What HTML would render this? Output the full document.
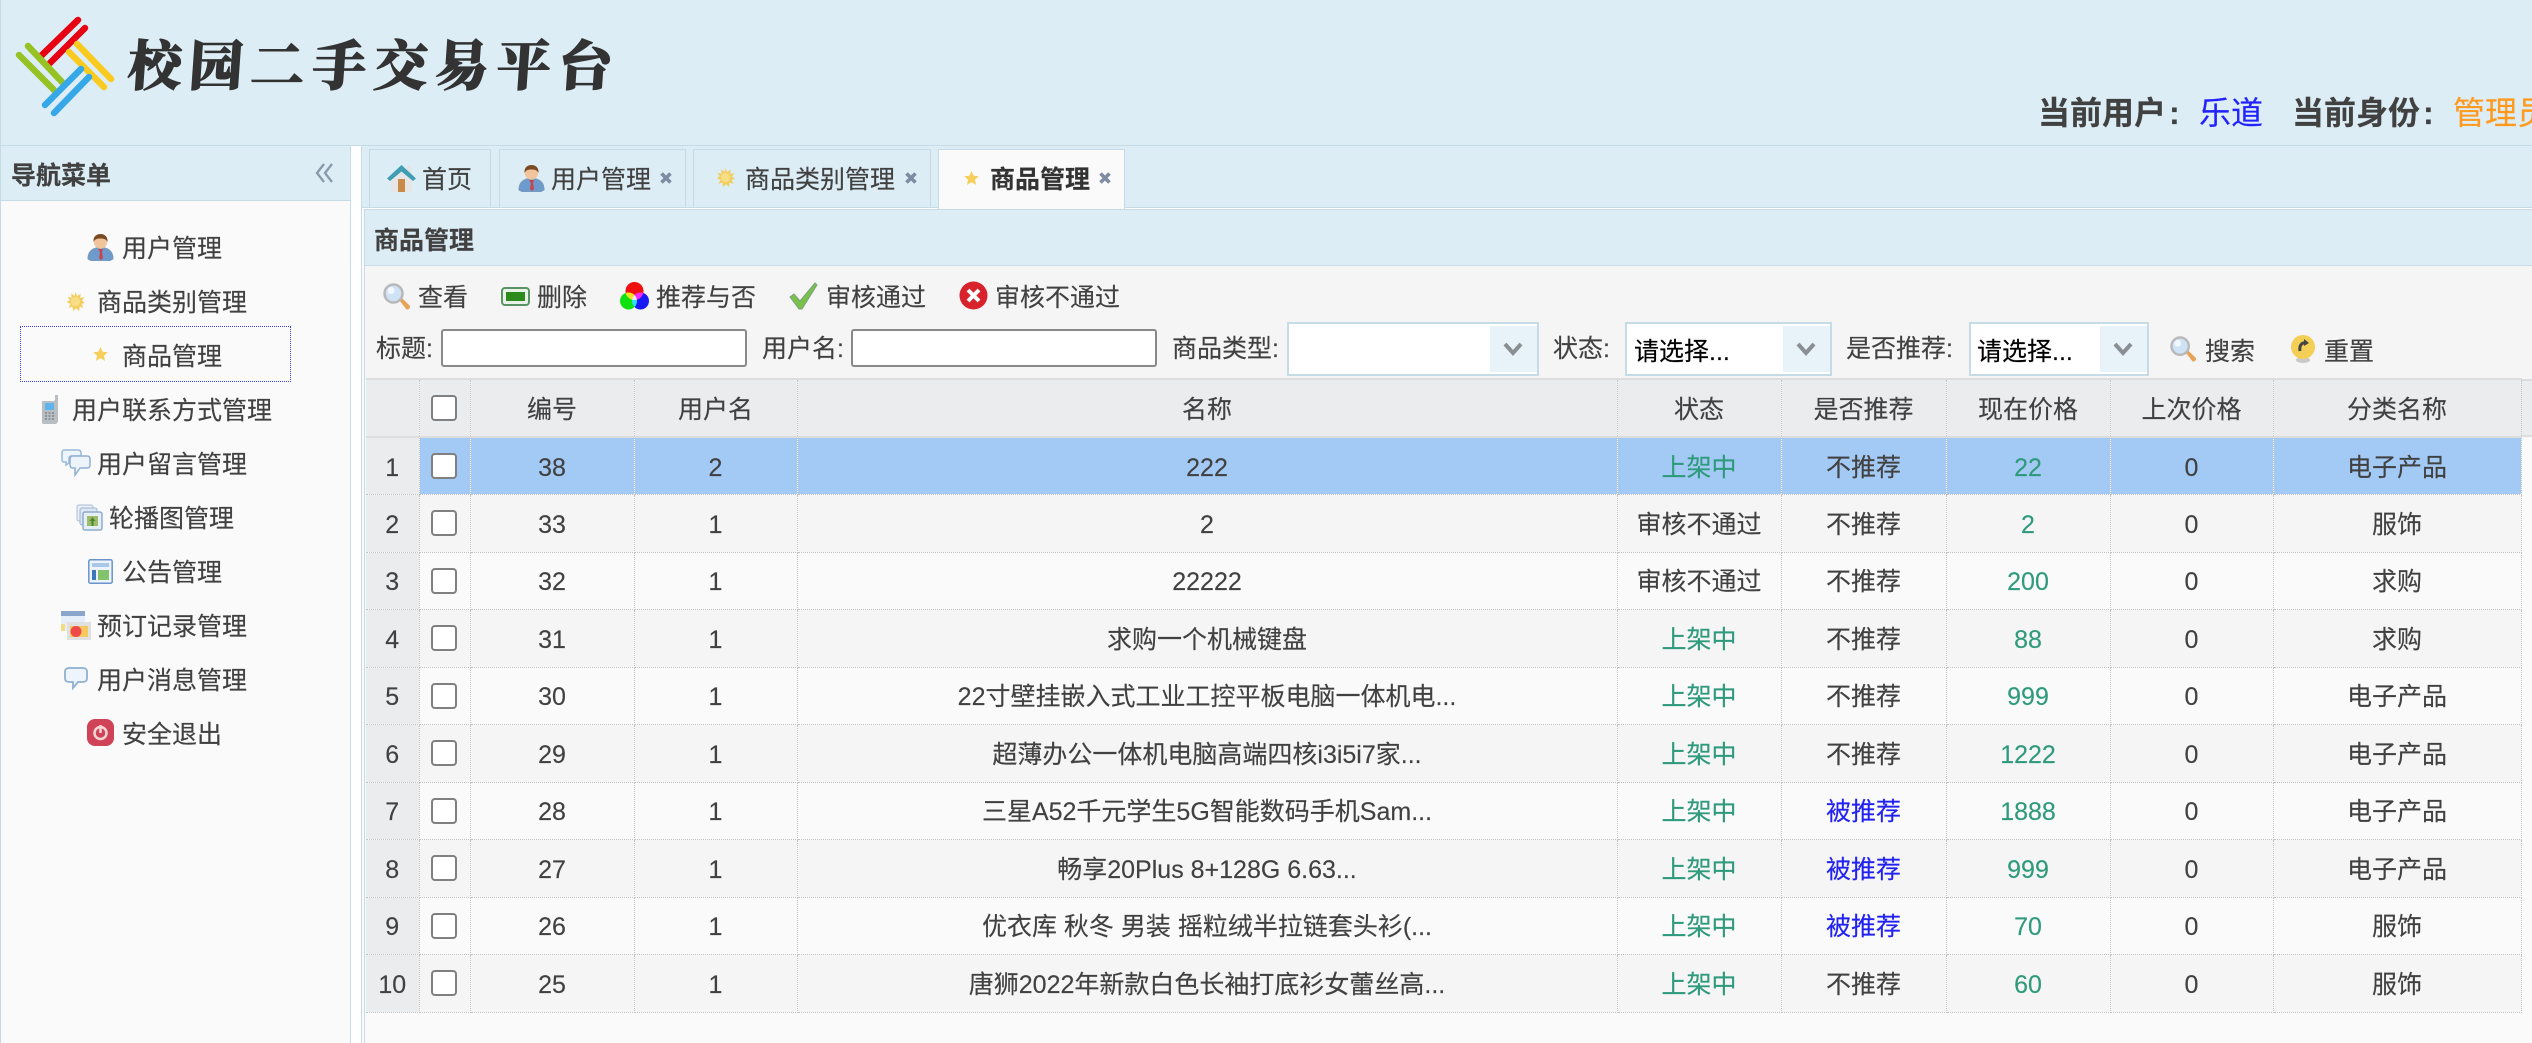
<!DOCTYPE html>
<html lang="zh-CN">
<head>
<meta charset="utf-8">
<title>校园二手交易平台</title>
<style>
html,body{margin:0;padding:0;}
body{position:relative;width:2532px;height:1043px;overflow:hidden;background:#fafafa;color:#414141;font:25px/30px "Liberation Sans","Noto Sans CJK SC",sans-serif;-webkit-text-stroke:.15px currentColor;}
.a{position:absolute;}
.t{position:absolute;white-space:nowrap;line-height:30px;margin-top:2px;}
.b{font-weight:700;}
svg.a{overflow:visible;}
.tab{position:absolute;top:149px;height:58px;box-sizing:border-box;border:1px solid #c5dbe6;border-bottom:0;background:#dcedf5;}
.tab.on{background:#fafafa;height:60px;}
.inp{position:absolute;top:329px;height:38px;box-sizing:border-box;background:#fff;border:2px solid #8a8a8a;border-radius:3px;}
.sel{position:absolute;top:322px;height:54px;box-sizing:border-box;background:#fff;border:2px solid #c5dbe6;}
.sel i{position:absolute;right:0;top:2px;bottom:2px;background:#e8f3f9;}
table{position:absolute;left:366px;top:378px;border-collapse:collapse;table-layout:fixed;width:2155px;font-size:25px;}
td{box-sizing:border-box;height:57.5px;padding:3px 0 0;text-align:center;white-space:nowrap;overflow:hidden;border-right:1px dotted #c4c4c4;border-bottom:1px dotted #c4c4c4;}
tr.h td{background:#ebecee;height:58px;border-top:2px solid #ddd;border-bottom:2px solid #ddd;}
tr.e td{background:#f5f5f5;}
tr.o td{background:#fafafa;}
tr.s td{background:#a3c9f5;}
tr td:first-child{background:#ebecee;}
.c{display:inline-block;vertical-align:middle;width:26px;height:26px;box-sizing:border-box;background:#fff;border:2px solid #808080;border-radius:4px;position:relative;top:-3px;left:-1px;}
.g{color:#2f9a7c;}
.u{color:#2222f0;}
</style>
</head>
<body>
<svg width="0" height="0" style="position:absolute">
<defs>
<symbol id="user" viewBox="0 0 27 27">
<path d="M1 25c0-7 4-10 8-11h9c4 1 8 4 8 11l-4 2H5z" fill="#6d9bcd" stroke="#7d98b5"/>
<path d="M11 15h5l-1 3 1 6-2 2-2-2 1-6z" fill="#c8434a"/>
<circle cx="13.5" cy="8" r="6.6" fill="#f2c49c"/>
<path d="M6.500 8C6 2 10 0 13.500 0S21 2 20.500 8C19 5 17 4.500 13.500 4.500S8 5 6.500 8z" fill="#7a4a22"/>
</symbol>
<symbol id="sun" viewBox="0 0 20 20">
<path d="M10 0l1.800 4.500L15.500 1.500l-.6 4.800 4.600-.8-2.900 3.700 3.400 1.800-3.700 1.700 2.300 4-4.300-1.500-.6 4.800L10.500 17l-3 3-.7-4.700-4.300 1.400 2.300-4L.8 10.500l3.400-2L1.300 5 5.900 6l-.5-4.700L9 4.400z" fill="#f2cd5e"/>
<circle cx="10" cy="10" r="5" fill="#f7dd84"/>
</symbol>
<symbol id="star" viewBox="0 0 16 16">
<path d="M8 0l2.300 5 5.400.6-4 3.700 1.100 5.500L8 12l-4.800 2.800 1.100-5.500-4-3.700L5.700 5z" fill="#f6cf5a"/>
</symbol>
<symbol id="mag" viewBox="0 0 27 27">
<path d="M16 17l3-2 8 8c.5 2-1.500 4-3.500 3.500z" fill="#e5a45a"/>
<circle cx="10.500" cy="10.500" r="9" fill="#cfe3f6" stroke="#b9b9b9" stroke-width="2.500"/>
<circle cx="8" cy="7.500" r="3.500" fill="#f2f8fe"/>
</symbol>
</defs>
</svg>

<!-- Header -->
<div class="a" style="left:0;top:0;width:2532px;height:145px;background:#dcedf5;border-left:1px solid #c5dbe6;box-sizing:border-box;"></div>
<div class="a" style="left:0;top:145px;width:2532px;height:1px;background:#c5dbe6;"></div>
<svg class="a" style="left:0;top:0" width="125" height="125" fill="none" stroke-width="6.500" stroke-linecap="round">
<path d="M78 20 42 55M85 28 50 63" stroke="#e60012"/>
<path d="M77 44 111 79M69 52 104 87" stroke="#fbca1e"/>
<path d="M28 46 62 82M19 55 54 90" stroke="#97c224"/>
<path d="M81 69 45 105M89 77 54 113" stroke="#36a8e8"/>
</svg>
<div class="t" style="left:128px;top:27px;margin:0;line-height:72px;font-size:54px;letter-spacing:7.500px;font-weight:900;color:#333;-webkit-text-stroke:1px #333;font-family:'Noto Serif CJK SC','Liberation Serif',serif;transform:skewX(-4deg);">校园二手交易平台</div>
<div class="t b" style="left:2038px;top:93px;margin:0;line-height:40px;font-size:32px;">当前用户<span style="margin-left:3px">:</span></div>
<div class="t" style="left:2199px;top:93px;margin:0;line-height:40px;font-size:32px;color:#2222ff;">乐道</div>
<div class="t b" style="left:2292px;top:93px;margin:0;line-height:40px;font-size:32px;">当前身份<span style="margin-left:3px">:</span></div>
<div class="t" style="left:2453px;top:93px;margin:0;line-height:40px;font-size:32px;color:#ff9a1f;">管理员</div>

<!-- Sidebar -->
<div class="a" style="left:0;top:146px;width:351px;height:897px;box-sizing:border-box;background:#fafafa;border-left:1px solid #c5dbe6;border-right:1px solid #c5dbe6;"></div>
<div class="a" style="left:1px;top:146px;width:349px;height:54px;background:#dcedf5;border-bottom:1px solid #c5dbe6;"></div>
<div class="a" style="left:351px;top:146px;width:10px;height:897px;background:#fff;"></div>
<div class="a" style="left:361px;top:146px;width:1px;height:897px;background:#c5dbe6;"></div>
<div class="t b" style="left:11px;top:159px;">导航菜单</div>
<svg class="a" style="left:315px;top:163px" width="19" height="20" fill="none" stroke="#8a98a8" stroke-width="2.300"><path d="M9 1 2 10l7 9M17 1l-7 9 7 9"/></svg>

<div class="a" style="left:20px;top:326px;width:271px;height:56px;box-sizing:border-box;border:1px dotted #3a3af0;"></div>

<svg class="a" style="left:87px;top:234px" width="27" height="27"><use href="#user"/></svg>
<div class="t" style="left:122px;top:232px;">用户管理</div>
<svg class="a" style="left:66px;top:292px" width="19" height="19"><use href="#sun"/></svg>
<div class="t" style="left:97px;top:286px;">商品类别管理</div>
<svg class="a" style="left:93px;top:347px" width="15" height="15"><use href="#star"/></svg>
<div class="t" style="left:122px;top:340px;">商品管理</div>

<svg class="a" style="left:41px;top:395px" width="18" height="29" viewBox="0 0 18 29">
<path d="M1 6h12l1-1V0h3v27l-2 2H2l-1-1z" fill="#b9bec2"/><rect x="4" y="8" width="9" height="7" fill="#5fb4ee"/><path d="M4 18h9M4 21h9M4 24h9" stroke="#8d9397" stroke-width="2" stroke-dasharray="2 1.500"/>
</svg>
<div class="t" style="left:72px;top:394px;">用户联系方式管理</div>

<svg class="a" style="left:61px;top:449px" width="30" height="28" viewBox="0 0 30 28">
<path d="M3 1h14c2 0 3 1 3 3v3H10c-2 0-2 2-2 3v4l-3 2v-3H3c-2 0-2-1-2-3V4c0-2 1-3 2-3z" fill="#eef4fb" stroke="#9bb8d8" stroke-width="1.500"/>
<path d="M12 7h14c2 0 3 1 3 3v6c0 2-1 3-3 3h-7l-5 7v-7h-2c-2 0-3-1-3-3v-6c0-2 1-3 3-3z" fill="#eef4fb" stroke="#8fb0d3" stroke-width="1.500"/>
</svg>
<div class="t" style="left:97px;top:448px;">用户留言管理</div>

<svg class="a" style="left:76px;top:504px" width="27" height="27" viewBox="0 0 27 27">
<rect x="1" y="1" width="16" height="16" rx="2" fill="#eaf0f8" stroke="#a9bcd3"/><rect x="4" y="4" width="17" height="17" rx="2" fill="#dde7f3" stroke="#a0b5ce"/>
<rect x="7" y="8" width="19" height="18" rx="2" fill="#e6eef7" stroke="#8eacd0" stroke-width="1.500"/><rect x="11" y="12" width="11" height="10" fill="#9dbb6a"/><path d="M16.500 13l3 4h-6zM15.500 17h2v5h-2z" fill="#4a8a2c"/>
</svg>
<div class="t" style="left:109px;top:502px;">轮播图管理</div>

<svg class="a" style="left:88px;top:559px" width="25" height="25" viewBox="0 0 25 25">
<rect x=".8" y=".8" width="23.400" height="23.400" rx="1.500" fill="#eef3fa" stroke="#6a94cc" stroke-width="1.500"/><rect x="4" y="4" width="17" height="4" fill="#a8c8ea"/><rect x="4" y="11" width="4" height="10" fill="#3d78bd"/><rect x="10" y="11" width="11" height="10" fill="#82c46c"/>
</svg>
<div class="t" style="left:122px;top:556px;">公告管理</div>

<svg class="a" style="left:61px;top:611px" width="30" height="29" viewBox="0 0 30 29">
<rect x="0" y="0" width="24" height="20" fill="#e6eefa"/><rect x="0" y="0" width="24" height="5" fill="#8ba6cc"/><path d="M0 13h4v7H0z" fill="#f3dc80"/>
<rect x="6" y="11" width="24" height="18" fill="#e0e0e0"/><rect x="9" y="15" width="18" height="11" fill="#f7c85e"/><circle cx="15" cy="20.500" r="5.500" fill="#ee4a4a"/>
</svg>
<div class="t" style="left:97px;top:610px;">预订记录管理</div>

<svg class="a" style="left:64px;top:667px" width="24" height="23" viewBox="0 0 24 23">
<path d="M5 1h14c2.500 0 4 1.500 4 3.500v7c0 2-1.500 3.500-4 3.500h-5l-5 6v-6H5c-2.500 0-4-1.500-4-3.500v-7C1 2.500 2.500 1 5 1z" fill="#eef4fb" stroke="#8fb0d3" stroke-width="1.800"/>
</svg>
<div class="t" style="left:97px;top:664px;">用户消息管理</div>

<svg class="a" style="left:87px;top:719px" width="27" height="27" viewBox="0 0 27 27">
<rect x="0" y="0" width="27" height="27" rx="8" fill="#cf4257"/><circle cx="13.500" cy="14" r="6" fill="none" stroke="#f6d5d5" stroke-width="2.500"/><path d="M13.500 6v8" stroke="#f6d5d5" stroke-width="2.500"/>
</svg>
<div class="t" style="left:122px;top:718px;">安全退出</div>

<!-- Tabs -->
<div class="a" style="left:362px;top:146px;width:2170px;height:61px;background:#dcedf5;"></div>
<div class="a" style="left:362px;top:207px;width:2170px;height:1px;background:#c5dbe6;"></div>
<div class="a" style="left:362px;top:208px;width:2170px;height:1px;background:#fff;"></div>

<div class="tab" style="left:369px;width:122px;"></div>
<div class="tab" style="left:499px;width:187px;"></div>
<div class="tab" style="left:693px;width:238px;"></div>
<div class="tab on" style="left:938px;width:187px;z-index:3;"></div>

<svg class="a" style="left:387px;top:165px" width="29" height="27" viewBox="0 0 29 27">
<path d="M4 11 14.500 3 25 11v14c0 1-1 2-2 2H6c-1 0-2-1-2-2z" fill="#e6e6e6"/><rect x="11" y="14" width="7" height="13" fill="#c98a4a"/>
<rect x="20" y="1" width="4" height="8" fill="#e4e4e4"/>
<path d="M0 13.500 14.500 0 29 13.500 26 16 14.500 6.500 3 16z" fill="#3f9db4"/>
</svg>
<div class="t" style="left:422px;top:163px;">首页</div>

<svg class="a" style="left:518px;top:165px" width="27" height="27"><use href="#user"/></svg>
<div class="t" style="left:551px;top:163px;">用户管理</div>
<svg class="a" style="left:660px;top:172px" width="12" height="12" viewBox="0 0 12 12"><path d="M1.500 1.500l9 9M10.500 1.500l-9 9" stroke="#7d8ba3" stroke-width="3.600"/></svg>

<svg class="a" style="left:716px;top:168px" width="19" height="19"><use href="#sun"/></svg>
<div class="t" style="left:745px;top:163px;">商品类别管理</div>
<svg class="a" style="left:905px;top:172px" width="12" height="12" viewBox="0 0 12 12"><path d="M1.500 1.500l9 9M10.500 1.500l-9 9" stroke="#7d8ba3" stroke-width="3.600"/></svg>

<svg class="a" style="left:964px;top:171px;z-index:4" width="15" height="15"><use href="#star"/></svg>
<div class="t b" style="left:990px;top:163px;z-index:4;color:#333;">商品管理</div>
<svg class="a" style="left:1099px;top:172px;z-index:4" width="12" height="12" viewBox="0 0 12 12"><path d="M1.500 1.500l9 9M10.500 1.500l-9 9" stroke="#7d8ba3" stroke-width="3.600"/></svg>

<!-- Panel -->
<div class="a" style="left:364px;top:209px;width:2168px;height:834px;box-sizing:border-box;background:#fafafa;border-left:1px solid #c5dbe6;border-top:1px solid #c5dbe6;"></div>
<div class="a" style="left:365px;top:210px;width:2167px;height:55px;background:#dcedf5;border-bottom:1px solid #c5dbe6;"></div>
<div class="a" style="left:365px;top:266px;width:2167px;height:113px;background:#f5f5f5;"></div>
<div class="t b" style="left:374px;top:224px;">商品管理</div>

<!-- Toolbar -->
<svg class="a" style="left:383px;top:283px" width="27" height="27"><use href="#mag"/></svg>
<div class="t" style="left:418px;top:281px;">查看</div>
<svg class="a" style="left:501px;top:287px" width="29" height="19" viewBox="0 0 29 19"><rect x="1" y="1" width="27" height="17" rx="3" fill="#e8f2e8" stroke="#5b9463" stroke-width="2"/><rect x="5" y="5" width="19" height="9" fill="#2d8a1c"/></svg>
<div class="t" style="left:537px;top:281px;">删除</div>
<svg class="a" style="left:620px;top:282px;isolation:isolate" width="29" height="28" viewBox="0 0 29 28">
<circle cx="14.500" cy="9" r="9" fill="#f01010" style="mix-blend-mode:screen"/><circle cx="8.500" cy="19" r="8.500" fill="#10e010" style="mix-blend-mode:screen"/><circle cx="20.500" cy="19" r="8.500" fill="#1a1af5" style="mix-blend-mode:screen"/>
</svg>
<div class="t" style="left:656px;top:281px;">推荐与否</div>
<svg class="a" style="left:789px;top:282px" width="29" height="28" viewBox="0 0 29 28"><path d="M1 15l4-3 6 7L26 1l2 2-15 24h-3z" fill="#78c24c" stroke="#7d9f7d"/></svg>
<div class="t" style="left:826px;top:281px;">审核通过</div>
<svg class="a" style="left:959px;top:281px" width="29" height="29" viewBox="0 0 29 29"><circle cx="14.500" cy="14.500" r="14" fill="#d8222c"/><path d="M9 9l11 11M20 9 9 20" stroke="#fff" stroke-width="4"/></svg>
<div class="t" style="left:995px;top:281px;">审核不通过</div>

<!-- Filters -->
<div class="t" style="left:376px;top:332px;">标题:</div>
<div class="inp" style="left:441px;width:306px;"></div>
<div class="t" style="left:762px;top:332px;">用户名:</div>
<div class="inp" style="left:851px;width:306px;"></div>
<div class="t" style="left:1172px;top:332px;">商品类型:</div>
<div class="sel" style="left:1287px;width:252px;"><i style="width:47px;"></i></div>
<div class="t" style="left:1553px;top:332px;">状态:</div>
<div class="sel" style="left:1625px;width:207px;"><i style="width:47px;"></i></div>
<div class="t" style="left:1634px;top:335px;color:#000;">请选择...</div>
<div class="t" style="left:1846px;top:332px;">是否推荐:</div>
<div class="sel" style="left:1969px;width:180px;"><i style="width:47px;"></i></div>
<div class="t" style="left:1977px;top:335px;color:#000;">请选择...</div>
<svg class="a" style="left:1503px;top:342px" width="20" height="14" viewBox="0 0 20 14"><path d="M2 2l8 9 8-9" fill="none" stroke="#8a8f94" stroke-width="4"/></svg>
<svg class="a" style="left:1796px;top:342px" width="20" height="14" viewBox="0 0 20 14"><path d="M2 2l8 9 8-9" fill="none" stroke="#8a8f94" stroke-width="4"/></svg>
<svg class="a" style="left:2113px;top:342px" width="20" height="14" viewBox="0 0 20 14"><path d="M2 2l8 9 8-9" fill="none" stroke="#8a8f94" stroke-width="4"/></svg>
<svg class="a" style="left:2170px;top:336px" width="26" height="26"><use href="#mag"/></svg>
<div class="t" style="left:2205px;top:335px;">搜索</div>
<svg class="a" style="left:2291px;top:335px" width="24" height="28" viewBox="0 0 24 28"><ellipse cx="12" cy="25" rx="7" ry="3" fill="#c9c9c9"/><circle cx="12" cy="12" r="12" fill="#f4cf55"/><path d="M16 8c-5-1-8 2-7 8" fill="none" stroke="#444" stroke-width="3"/><path d="M13 4l5 4-5 3z" fill="#444"/></svg>
<div class="t" style="left:2324px;top:335px;">重置</div>

<!-- Grid -->
<div class="a" style="left:2521px;top:379px;width:11px;height:58px;box-sizing:border-box;background:#ebecee;border-top:2px solid #ddd;border-bottom:2px solid #ddd;"></div>
<table>
<colgroup><col style="width:53px"><col style="width:51px"><col style="width:164px"><col style="width:163px"><col style="width:820px"><col style="width:164px"><col style="width:165px"><col style="width:164px"><col style="width:163px"><col style="width:248px"></colgroup>
<tr class="h"><td></td><td><span class="c"></span></td><td>编号</td><td>用户名</td><td>名称</td><td>状态</td><td>是否推荐</td><td>现在价格</td><td>上次价格</td><td>分类名称</td></tr>
<tr class="s"><td>1</td><td><span class="c"></span></td><td>38</td><td>2</td><td>222</td><td class="g">上架中</td><td>不推荐</td><td class="g">22</td><td>0</td><td>电子产品</td></tr>
<tr class="e"><td>2</td><td><span class="c"></span></td><td>33</td><td>1</td><td>2</td><td>审核不通过</td><td>不推荐</td><td class="g">2</td><td>0</td><td>服饰</td></tr>
<tr class="o"><td>3</td><td><span class="c"></span></td><td>32</td><td>1</td><td>22222</td><td>审核不通过</td><td>不推荐</td><td class="g">200</td><td>0</td><td>求购</td></tr>
<tr class="e"><td>4</td><td><span class="c"></span></td><td>31</td><td>1</td><td>求购一个机械键盘</td><td class="g">上架中</td><td>不推荐</td><td class="g">88</td><td>0</td><td>求购</td></tr>
<tr class="o"><td>5</td><td><span class="c"></span></td><td>30</td><td>1</td><td>22寸壁挂嵌入式工业工控平板电脑一体机电...</td><td class="g">上架中</td><td>不推荐</td><td class="g">999</td><td>0</td><td>电子产品</td></tr>
<tr class="e"><td>6</td><td><span class="c"></span></td><td>29</td><td>1</td><td>超薄办公一体机电脑高端四核i3i5i7家...</td><td class="g">上架中</td><td>不推荐</td><td class="g">1222</td><td>0</td><td>电子产品</td></tr>
<tr class="o"><td>7</td><td><span class="c"></span></td><td>28</td><td>1</td><td>三星A52千元学生5G智能数码手机Sam...</td><td class="g">上架中</td><td class="u">被推荐</td><td class="g">1888</td><td>0</td><td>电子产品</td></tr>
<tr class="e"><td>8</td><td><span class="c"></span></td><td>27</td><td>1</td><td>畅享20Plus 8+128G 6.63...</td><td class="g">上架中</td><td class="u">被推荐</td><td class="g">999</td><td>0</td><td>电子产品</td></tr>
<tr class="o"><td>9</td><td><span class="c"></span></td><td>26</td><td>1</td><td>优衣库 秋冬 男装 摇粒绒半拉链套头衫(...</td><td class="g">上架中</td><td class="u">被推荐</td><td class="g">70</td><td>0</td><td>服饰</td></tr>
<tr class="e"><td>10</td><td><span class="c"></span></td><td>25</td><td>1</td><td>唐狮2022年新款白色长袖打底衫女蕾丝高...</td><td class="g">上架中</td><td>不推荐</td><td class="g">60</td><td>0</td><td>服饰</td></tr>
</table>
</body>
</html>
